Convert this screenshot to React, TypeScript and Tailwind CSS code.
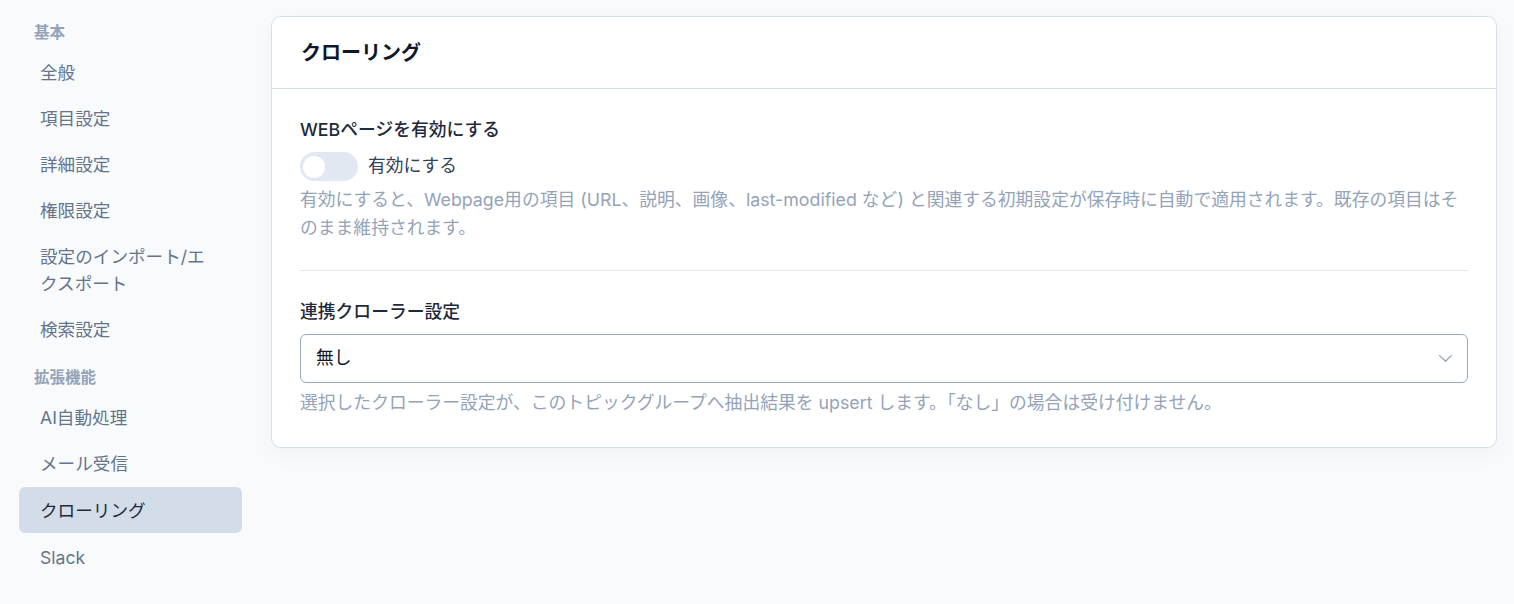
import React from 'react';

const font = { fontFamily: 'Inter, "Noto Sans CJK JP", sans-serif' };

type NavItem = { label: string; active?: boolean };

const sections: { title: string; items: NavItem[] }[] = [
  {
    title: '基本',
    items: [
      { label: '全般' },
      { label: '項目設定' },
      { label: '詳細設定' },
      { label: '権限設定' },
      { label: '設定のインポート/エクスポート' },
      { label: '検索設定' },
    ],
  },
  {
    title: '拡張機能',
    items: [
      { label: 'AI自動処理' },
      { label: 'メール受信' },
      { label: 'クローリング', active: true },
      { label: 'Slack' },
    ],
  },
];

const Sidebar: React.FC = () => (
  <aside className="w-[242px] shrink-0 pl-[19px] pt-[23px]">
    {sections.map((section, i) => (
      <div key={section.title} className={i > 0 ? 'mt-4' : ''}>
        <div className="px-[15px] text-[15.5px] font-bold leading-[20px] text-[#94a3b8] mb-1.5">
          {section.title}
        </div>
        <ul>
          {section.items.map((item) => (
            <li
              key={item.label}
              className={
                item.active
                  ? 'my-px rounded-md bg-[#d3dde9] px-[21px] py-[9.5px] text-[17.6px] leading-[27px] text-[#1e293b]'
                  : 'rounded-md px-[21px] py-[9.5px] text-[17.6px] leading-[27px] text-[#64748b]'
              }
            >
              {item.label}
            </li>
          ))}
        </ul>
      </div>
    ))}
  </aside>
);

const Toggle: React.FC = () => (
  <div className="flex h-[29px] w-[58px] items-center rounded-full bg-[#e2e8f2] px-[3px]">
    <div className="h-[22px] w-[22px] rounded-full bg-white" />
  </div>
);

const Chevron: React.FC = () => (
  <svg width="13" height="7" viewBox="0 0 13 7" fill="none" className="text-[#94a3b8]">
    <polyline points="0.6,0.6 6.5,6.3 12.4,0.6" stroke="currentColor" strokeWidth="1.3" strokeLinecap="round" strokeLinejoin="round" />
  </svg>
);

const CrawlingCard: React.FC = () => (
  <div className="rounded-[10px] border border-[#d6e0ec] bg-white shadow-[0_6px_24px_rgba(15,23,42,0.04)]">
    <div className="flex h-[72px] items-center border-b border-[#d6e0ec] px-[29px]">
      <h2 className="text-[20px] font-bold text-[#0f172a]">クローリング</h2>
    </div>
    <div className="px-[28px] pt-[30px] pb-[30px]">
      <div className="text-[17.8px] font-medium leading-[22px] text-[#1e293b]">WEBページを有効にする</div>
      <div className="mt-[11px] flex items-center gap-[10px]">
        <Toggle />
        <span className="text-[17.8px] text-[#334155]">有効にする</span>
      </div>
      <p className="mt-[5px] text-[17.8px] leading-[28px] text-[#94a3b8]">
        有効にすると、Webpage用の項目 (URL、説明、画像、last-modified など) と関連する初期設定が保存時に自動で適用されます。既存の項目はそのまま維持されます。
      </p>
      <div className="mt-[28px] border-t border-[#dfe6ee]" />
      <div className="mt-[30px] text-[17.8px] font-medium leading-[22px] text-[#1e293b]">連携クローラー設定</div>
      <div className="mt-[11px] flex h-[49px] items-center justify-between rounded-[6px] border border-[#9aa8c0] pl-[15px] pr-[15px]">
        <span className="text-[17.8px] text-[#0f172a]">無し</span>
        <Chevron />
      </div>
      <p className="mt-[6px] text-[17.8px] leading-[28px] text-[#94a3b8]">
        選択したクローラー設定が、このトピックグループへ抽出結果を upsert します。「なし」の場合は受け付けません。
      </p>
    </div>
  </div>
);

export default function App() {
  return (
    <div className="flex min-h-[604px] bg-[#f8fafc]" style={font}>
      <Sidebar />
      <main className="flex-1 pl-[29px] pr-[17px] pt-4">
        <CrawlingCard />
      </main>
    </div>
  );
}
